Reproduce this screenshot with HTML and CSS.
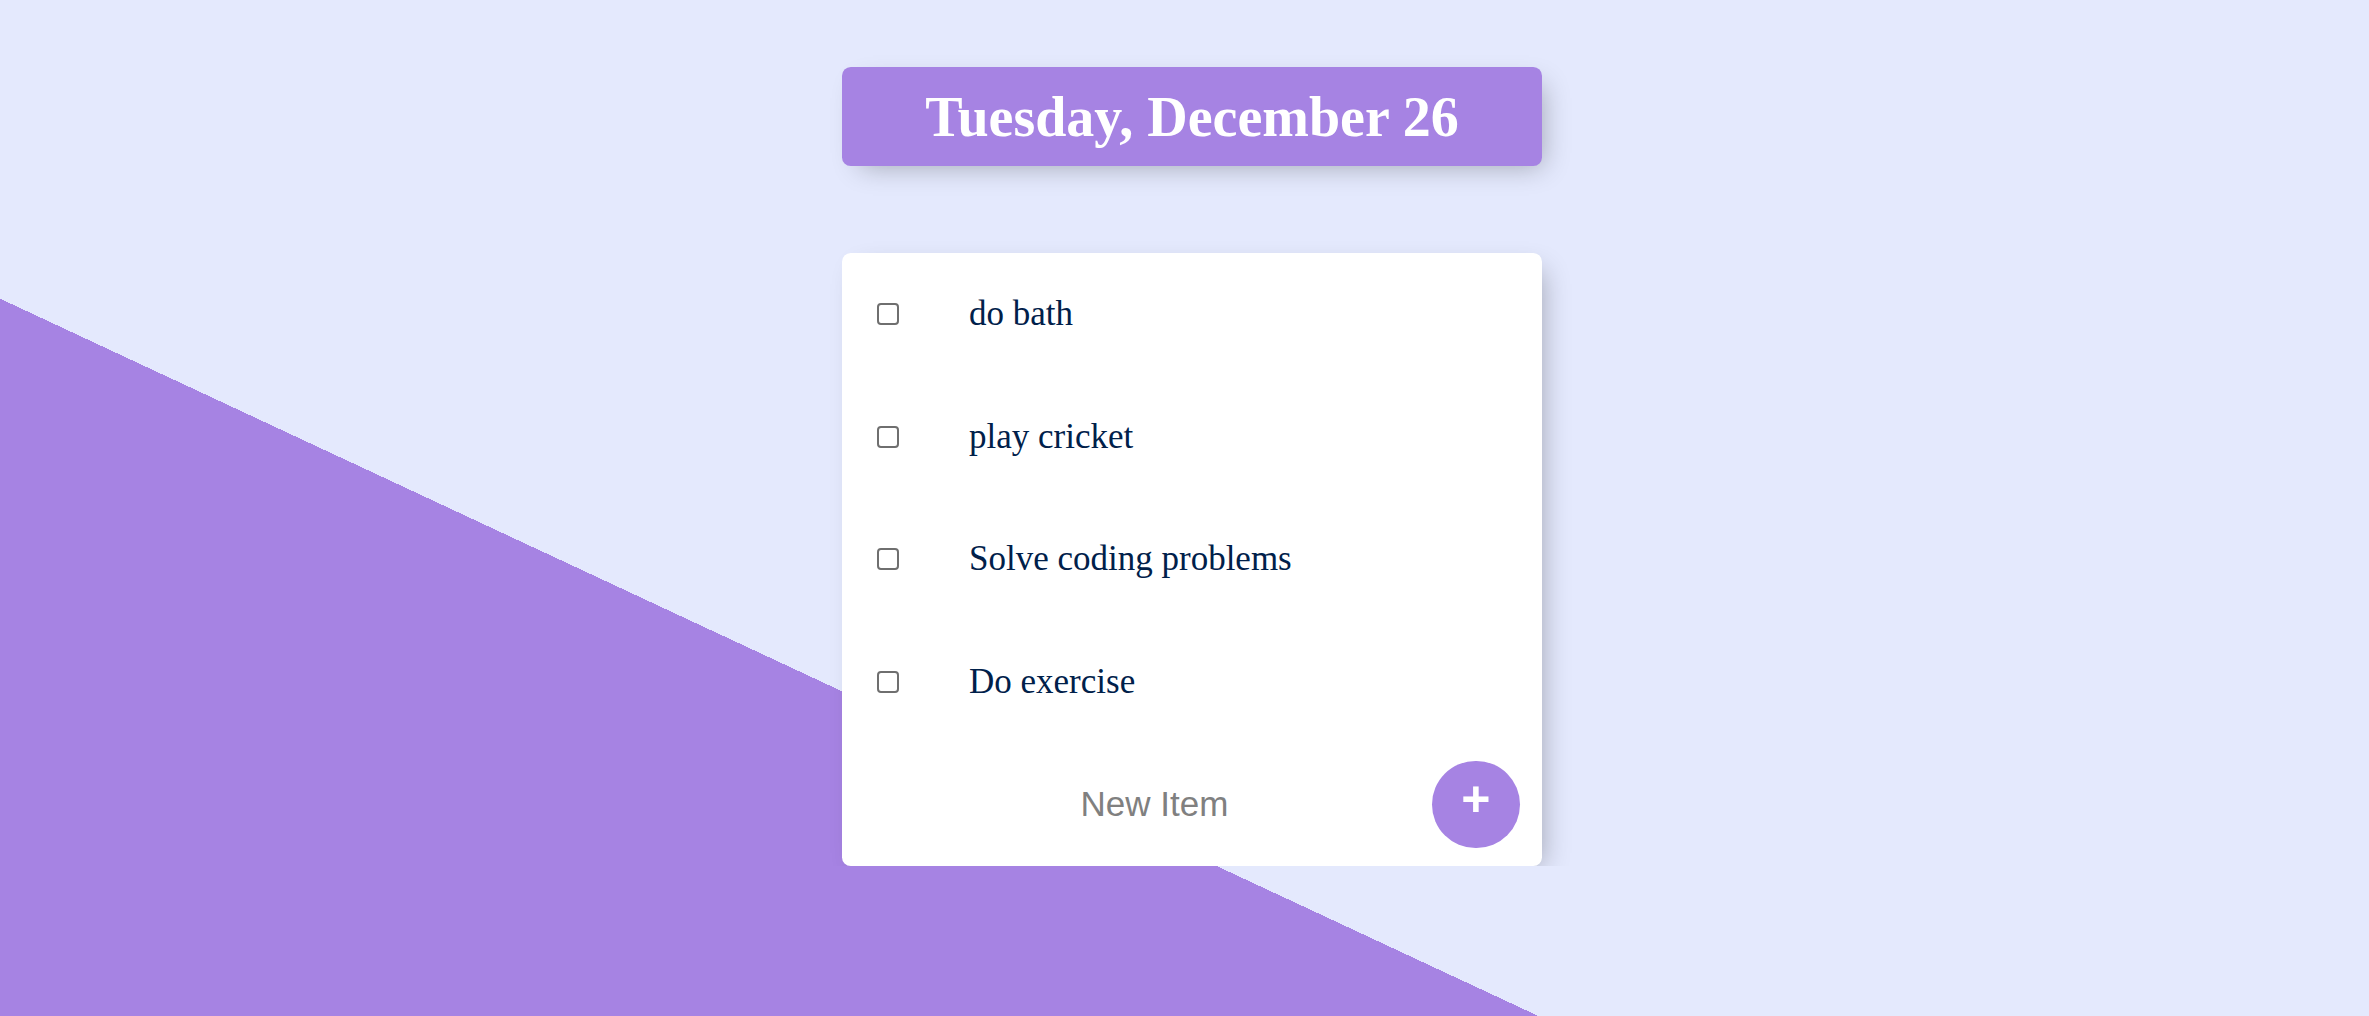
FILE: index.html
```html
<!DOCTYPE html>
<html lang="en">
<head>
<meta charset="utf-8">
<title>To Do List</title>
<link rel="stylesheet" href="styles.css">
</head>
<body>
  <div class="box heading">
    <h1>Tuesday, December 26</h1>
  </div>
  <div class="box list">
    <div class="item">
      <input type="checkbox" class="check">
      <p>do bath</p>
    </div>
    <div class="item">
      <input type="checkbox" class="check">
      <p>play cricket</p>
    </div>
    <div class="item">
      <input type="checkbox" class="check">
      <p>Solve coding problems</p>
    </div>
    <div class="item">
      <input type="checkbox" class="check">
      <p>Do exercise</p>
    </div>
    <form class="item new-form" onsubmit="return false">
      <input type="text" class="new-input" name="newItem" placeholder="New Item" autocomplete="off">
      <button type="submit" class="add-btn">+</button>
    </form>
  </div>
</body>
</html>
```

FILE: styles.css
```css
html {
  background-color: #E4E9FD;
  background-image: linear-gradient(25deg, #A683E3 50%, #E4E9FD 50%);
  background-repeat: no-repeat;
  background-size: 100% 1702px;
}

body {
  margin: 0;
  padding: 0 0 0 15px;
  font-family: "Liberation Serif", "Times New Roman", serif;
}

.box {
  width: 700px;
  margin: 0 auto;
  background: #ffffff;
  border-radius: 8.75px;
  box-shadow: 8.75px 8.75px 26px -8.75px rgba(0, 0, 0, 0.3);
}

.heading {
  margin-top: 67px;
  background-color: #A683E3;
  text-align: center;
}

.heading h1 {
  margin: 0;
  padding: 17.5px 0;
  font-family: "Liberation Serif", "Times New Roman", serif;
  font-weight: 700;
  font-size: 56px;
  line-height: 64px;
  color: #ffffff;
}

.list {
  margin-top: 87px;
  overflow: hidden;
}

.item {
  min-height: 122.5px;
  display: flex;
  align-items: center;
}

.check {
  -webkit-appearance: none;
  appearance: none;
  box-sizing: border-box;
  width: 22px;
  height: 22px;
  margin: 0 0 0 35px;
  border: 2px solid #6f6f6f;
  border-radius: 4px;
  background: #ffffff;
  flex: 0 0 auto;
}

.item p {
  margin: 0 0 0 35px;
  padding: 35px;
  font-size: 35px;
  font-weight: 400;
  color: #00204a;
  line-height: 40px;
}

.new-form {
  margin-left: 35px;
  text-align: center;
}

.new-input {
  box-sizing: border-box;
  width: 555px;
  height: 105px;
  padding: 0;
  border: none;
  outline: none;
  background: transparent;
  text-align: center;
  font-family: "Liberation Sans", Arial, sans-serif;
  font-size: 35px;
  color: #00204a;
}

.new-input::placeholder {
  color: grey;
  opacity: 1;
}

.add-btn {
  box-sizing: border-box;
  width: 87.5px;
  height: 87.5px;
  padding: 0 0 10px 0;
  border: 0;
  border-radius: 50%;
  background-color: #A683E3;
  color: #ffffff;
  font-family: "Liberation Sans", Arial, sans-serif;
  font-size: 50px;
  font-weight: 700;
  line-height: 1;
  display: flex;
  align-items: center;
  justify-content: center;
}
```
